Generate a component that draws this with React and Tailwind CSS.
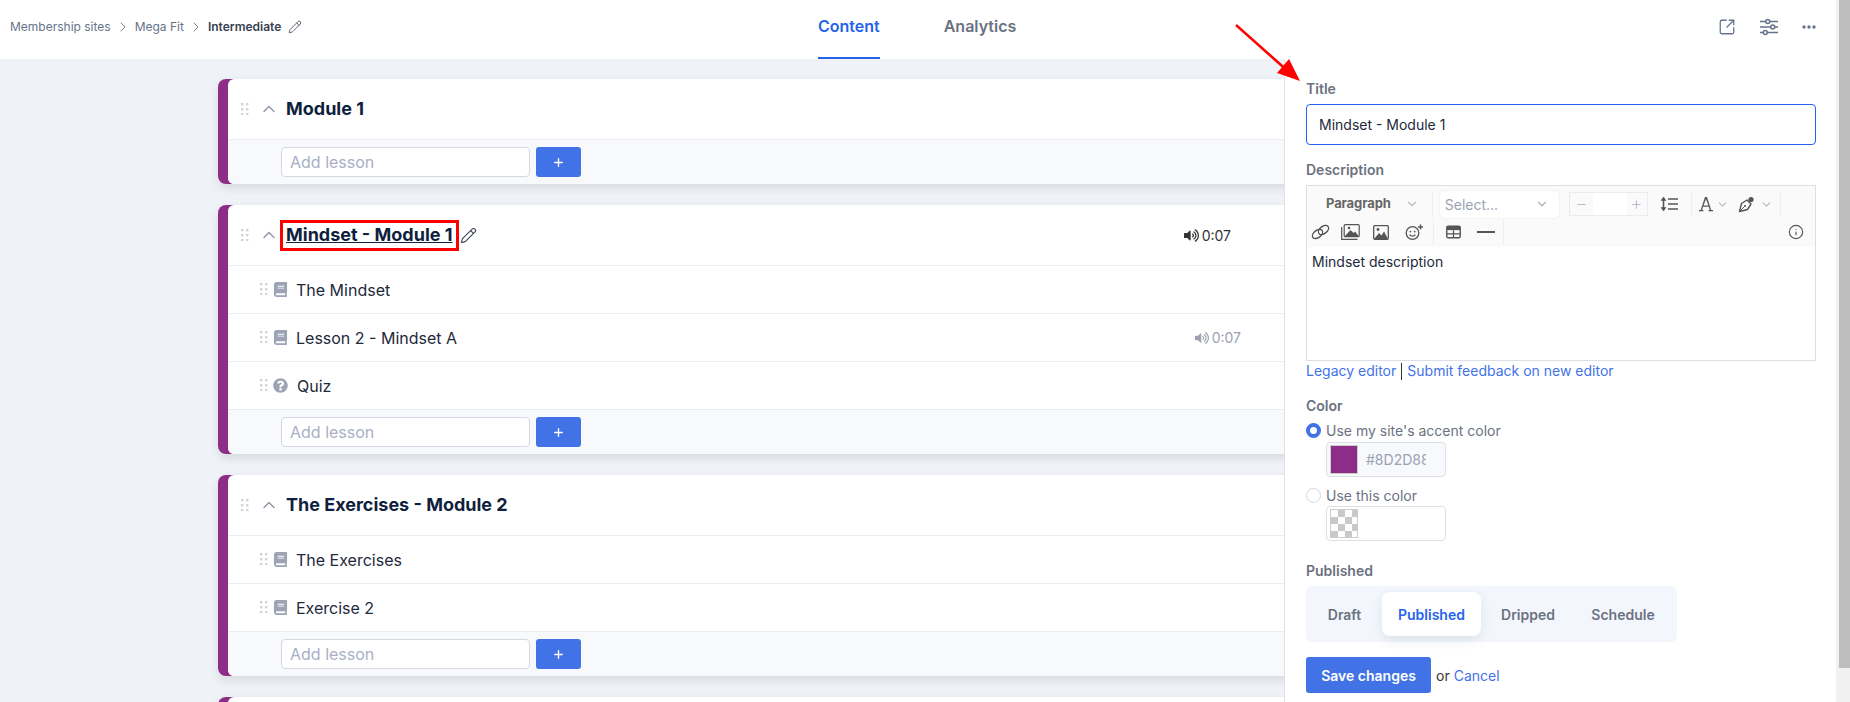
import { ChevronUp, ChevronRight, ChevronDown, Pencil, SquareArrowOutUpRight, Minus, Plus, Info } from "lucide-react";
import { FaBook, FaQuestionCircle, FaVolumeUp } from "react-icons/fa";

const PURPLE_CARD_SHADOW = "shadow-[0_4px_10px_rgba(30,41,59,0.12)]";

function Grip({ className }) {
  return (
    <svg width="8" height="12" viewBox="0 0 8 12" className={className}>
      {[1, 6].map((x) =>
        [1, 6, 11].map((y) => <rect key={`${x}-${y}`} x={x - 1} y={y - 1} width="2.4" height="2.4" fill="#cfd3da" />)
      )}
    </svg>
  );
}

function AddLesson() {
  return (
    <div className="flex h-[45px] items-center gap-[6px] border-t border-[#e9ecf0] bg-[#f7f9fc] pl-[53px]">
      <div className="flex h-[30px] w-[249px] items-center rounded-[4px] border border-[#d5d8e0] bg-white pl-[8px] text-[16px] text-[#a9b0c6]">
        Add lesson
      </div>
      <div className="flex h-[30px] w-[45px] items-center justify-center rounded-[3px] bg-[#4273e6] text-white">
        <Plus size={13} strokeWidth={2.5} />
      </div>
    </div>
  );
}

function LessonRow({ title, quiz, audio }) {
  return (
    <div className="flex h-[48px] items-center border-t border-[#e9ecf0] pl-[32px] pr-[83px] text-[16px] text-[#1e293b]">
      <Grip className="mt-[-2px]" />
      {quiz ? (
        <FaQuestionCircle size={15} className="ml-[5px] mr-[9px] text-[#9ca3b4]" />
      ) : (
        <FaBook size={15} className="ml-[5px] mr-[8px] mt-[-1px] text-[#9ca3b4]" />
      )}
      <span>{title}</span>
      {audio && (
        <span className="ml-auto flex items-center gap-[3px] text-[14px] text-[#9ca3af]">
          <FaVolumeUp size={14} />
          {audio}
        </span>
      )}
    </div>
  );
}

function Card({ title, highlight, audio, lessons = [], footer = true }) {
  return (
    <div className={`mr-[-40px] shrink-0 rounded-[8px] bg-[#8d2d88] pl-[10px] ${PURPLE_CARD_SHADOW}`}>
      <div className="overflow-hidden rounded-l-[6px] bg-white">
        <div className="flex h-[60px] items-center pr-[60px]">
          <Grip className="ml-[13px]" />
          <ChevronUp size={20} strokeWidth={1.6} className="ml-[10px] text-[#8c95a6]" />
          {highlight ? (
            <>
              <span className="ml-[1px] border-[3px] border-[#f00] px-[3px] py-[1.5px] text-[18px] leading-[22px] font-bold text-[#0f1f3d] underline">
                {title}
              </span>
              <Pencil size={17} strokeWidth={1.5} className="ml-[1px] text-[#374151]" />
            </>
          ) : (
            <span className="ml-[7px] text-[18px] leading-[22px] font-bold text-[#0f1f3d]">{title}</span>
          )}
          {audio && (
            <span className="ml-auto mr-[33px] flex items-center gap-[3px] text-[14px] text-[#333]">
              <FaVolumeUp size={15} />
              {audio}
            </span>
          )}
        </div>
        {lessons.map((l) => (
          <LessonRow key={l.title} {...l} />
        ))}
        {footer && <AddLesson />}
      </div>
    </div>
  );
}

function Label({ children, className = "" }) {
  return <div className={`text-[14px] leading-[20px] font-semibold text-[#6b7280] ${className}`}>{children}</div>;
}

function ToolSep({ className = "" }) {
  return <div className={`h-[26px] w-px bg-[#eceef1] ${className}`} />;
}

function LineHeightIcon() {
  return (
    <svg width="18" height="16" viewBox="0 0 18 16" className="text-[#555]" fill="none" stroke="currentColor">
      <path d="M3.5 2v12" strokeWidth="1.6" />
      <path d="M1 4.5 3.5 1 6 4.5zM1 11.5 3.5 15 6 11.5z" fill="currentColor" strokeWidth="0.5" />
      <path d="M8 3h10M8 8h10M8 13h10" strokeWidth="1.7" />
    </svg>
  );
}

function FontIcon() {
  return (
    <svg width="14" height="16" viewBox="0 0 14 16" className="text-[#555]" fill="currentColor">
      <path d="M6 1h2l4.2 13H14v1.2H9.6V14h1.2l-1-3.2H4.100L3.100 14h1.300v1.200H0V14h1.700zM7 3 4.500 9.500h4.900z" />
    </svg>
  );
}

function PenIcon() {
  return (
    <svg width="17" height="17" viewBox="0 0 17 17" fill="none" stroke="#555" strokeWidth="1.4" className="ml-[9px]">
      <path d="M1.500 15.500 3.500 7.500 9 4l4 4-3.500 5.500z" strokeLinejoin="round" />
      <path d="M1.800 15.200 6.200 10.800" strokeWidth="1" />
      <circle cx="7" cy="10" r="1.100" fill="#555" stroke="none" />
      <circle cx="13" cy="3.500" r="2.600" fill="#555" stroke="none" />
    </svg>
  );
}

function LinkIcon() {
  return (
    <svg width="19" height="16" viewBox="0 0 19 16" fill="none" stroke="#555" strokeWidth="1.400" className="ml-[4px]">
      <ellipse cx="6.500" cy="10" rx="5.800" ry="3.600" transform="rotate(-38 6.500 10)" />
      <ellipse cx="12.500" cy="6" rx="5.800" ry="3.600" transform="rotate(-38 12.500 6)" />
    </svg>
  );
}

function ImageIcon({ className = "" }) {
  return (
    <svg width="16" height="15" viewBox="0 0 16 15" className={className}>
      <rect x="0.700" y="0.700" width="14.600" height="13.600" fill="none" stroke="#555" strokeWidth="1.300" rx="1" />
      <circle cx="5" cy="4.500" r="1.400" fill="#555" />
      <path d="M1 14 6 8l2.500 2.500L11 6.500 15 14z" fill="#555" />
    </svg>
  );
}

function ImagesIcon({ className = "" }) {
  return (
    <svg width="19" height="16" viewBox="0 0 19 16" className={className}>
      <path d="M0.700 3v12.300H16.500" fill="none" stroke="#555" strokeWidth="1.200" />
      <rect x="3.200" y="0.700" width="15" height="12" fill="none" stroke="#555" strokeWidth="1.200" rx="1" />
      <circle cx="8" cy="4" r="1.300" fill="#555" />
      <path d="M3.500 12.500 9.500 6l3 3 1.500-1.500 4 5z" fill="#555" />
    </svg>
  );
}

function EmojiIcon() {
  return (
    <svg width="19" height="16" viewBox="0 0 19 16" fill="none" stroke="#555" strokeWidth="1.300">
      <circle cx="7.500" cy="9" r="6.300" />
      <circle cx="5.400" cy="7.600" r="0.900" fill="#555" stroke="none" />
      <circle cx="9.600" cy="7.600" r="0.900" fill="#555" stroke="none" />
      <path d="M4.600 10.600c1.400 2 4.400 2 5.800 0" />
      <path d="M15.500 0.500v5M13 3h5" strokeWidth="1.400" />
    </svg>
  );
}

function TableIcon({ className = "" }) {
  return (
    <svg width="15" height="14" viewBox="0 0 16 14" className={className}>
      <rect x="0.800" y="0.800" width="14.400" height="12.400" rx="1.500" fill="none" stroke="#555" strokeWidth="1.500" />
      <path d="M1 1h14v4H1z" fill="#555" />
      <path d="M8 5v8M1 9h14" stroke="#555" strokeWidth="1.300" />
    </svg>
  );
}

function Editor() {
  return (
    <div className="h-[176px] border border-[#dcdfe3] bg-white">
      <div className="h-[61px] bg-[#fafafa] text-[#555]">
        <div className="flex h-[33px] items-center pt-[3px]">
          <span className="ml-[19px] text-[13px] font-bold tracking-[-0.1px] text-[#666]">Paragraph</span>
          <ChevronDown size={14} className="ml-[14px] text-[#b6bcc6]" />
          <ToolSep className="ml-[13px]" />
          <div className="ml-[7px] flex h-[27px] w-[119px] items-center justify-between rounded-[5px] bg-white pl-[5px] pr-[10px] text-[14px] text-[#9aa3b2] shadow-[0_0_0_1px_#f2f3f5]">
            Select...
            <ChevronDown size={14} className="text-[#a9b0bb]" />
          </div>
          <div className="ml-[10px] flex h-[24px] w-[79px] border border-[#e9ebef]">
            <div className="flex w-[23px] items-center justify-center text-[#b6bcc6]">
              <Minus size={13} />
            </div>
            <div className="w-[34px] bg-white" />
            <div className="flex flex-1 items-center justify-center text-[#b6bcc6]">
              <Plus size={13} />
            </div>
          </div>
          <div className="ml-[12px] flex w-[18px] items-center">
            <LineHeightIcon />
          </div>
          <ToolSep className="ml-[13px]" />
          <div className="ml-[7px] flex items-center">
            <FontIcon />
          </div>
          <ChevronDown size={13} className="ml-[3px] text-[#b6bcc6]" />
          <PenIcon />
          <ChevronDown size={13} className="ml-[5px] text-[#b6bcc6]" />
          <ToolSep className="ml-[7px]" />
        </div>
        <div className="flex h-[28px] items-center pb-[2px]">
          <LinkIcon />
          <ImagesIcon className="ml-[11px]" />
          <ImageIcon className="ml-[13px]" />
          <div className="ml-[16px]">
            <EmojiIcon />
          </div>
          <ToolSep className="ml-[9px]" />
          <TableIcon className="ml-[12px]" />
          <div className="ml-[16px] h-[2px] w-[18px] bg-[#555]" />
          <ToolSep className="ml-[8px]" />
          <Info size={16} strokeWidth={1.7} className="ml-auto mr-[11px]" />
        </div>
      </div>
      <div className="px-[5px] pt-[5px] text-[14px] leading-[20px] text-[#1e293b]">Mindset description</div>
    </div>
  );
}

function Swatch({ hex, checker }) {
  return (
    <div className={`ml-[20px] flex h-[35px] w-[120px] items-center rounded-[4px] border border-[#dcdfe6] pl-[3px] ${hex ? "bg-[#f7f9fc]" : "bg-white"}`}>
      {checker ? (
        <div className="h-[29px] w-[28px] border border-[#ccc] bg-[repeating-conic-gradient(#c9c9c9_0_25%,#fff_0_50%)] bg-[length:14px_14px]" />
      ) : (
        <div className="h-[29px] w-[28px] border border-[#ccc] bg-[#8d2d88]" />
      )}
      {hex && <span className="ml-[8px] w-[60px] overflow-hidden text-[14px] whitespace-nowrap text-[#9aa3b2]">{hex}</span>}
    </div>
  );
}

function Panel() {
  return (
    <div className="relative z-10 h-full w-[552px] shrink-0 border-l border-[#dfe3e8] bg-white pl-[21px] pr-[20px]">
      <Label className="mt-[20px]">Title</Label>
      <div className="mt-[5px] flex h-[41px] items-center rounded-[4px] border border-[#2563eb] pl-[12px] text-[14px] text-[#1e293b]">
        Mindset - Module 1
      </div>
      <Label className="mt-[15px]">Description</Label>
      <div className="mt-[5px]">
        <Editor />
      </div>
      <div className="flex items-center text-[14px] leading-[20px] text-[#4273e6]">
        <span>Legacy editor</span>
        <span className="mx-[5px] h-[17px] w-px bg-[#333]" />
        <span>Submit feedback on new editor</span>
      </div>
      <Label className="mt-[15px]">Color</Label>
      <div className="mt-[4px] flex h-[20px] items-center text-[14px] text-[#6b7280]">
        <span className="mr-[5px] h-[15px] w-[15px] rounded-full border-[4px] border-[#4273e6] bg-white" />
        Use my site's accent color
      </div>
      <div className="mt-[2px]">
        <Swatch hex="#8D2D88" />
      </div>
      <div className="mt-[8px] flex h-[20px] items-center text-[14px] text-[#6b7280]">
        <span className="mr-[5px] h-[15px] w-[15px] rounded-full border border-[#d5d8e0] bg-white" />
        Use this color
      </div>
      <div className="mt-[1px]">
        <Swatch checker />
      </div>
      <Label className="mt-[20px]">Published</Label>
      <div className="mt-[5px] flex h-[56px] w-[371px] items-center rounded-[6px] bg-[#f3f7fd] pl-[8px] text-[14px] font-semibold text-[#6b7280]">
        <span className="mr-[7px] w-[61px] text-center">Draft</span>
        <span className="flex h-[44px] w-[99px] items-center justify-center rounded-[8px] bg-white text-[#2563eb] shadow-[0_4px_12px_rgba(30,41,59,0.1)]">
          Published
        </span>
        <span className="w-[94px] text-center">Dripped</span>
        <span className="w-[96px] text-center">Schedule</span>
      </div>
      <div className="mt-[15px] flex items-center text-[14px] text-[#333]">
        <span className="flex h-[36px] w-[125px] items-center justify-center rounded-[3px] bg-[#4273e6] font-semibold text-white">
          Save changes
        </span>
        <span className="ml-[5px]">or</span>
        <span className="ml-[4px] text-[#4273e6]">Cancel</span>
      </div>
    </div>
  );
}

function TopBar() {
  return (
    <div className="relative flex h-[59px] shrink-0 items-center bg-white pb-[5px]">
      <div className="flex items-center pl-[10px] text-[12px] text-[#64748b]">
        <span>Membership sites</span>
        <ChevronRight size={16} strokeWidth={1.3} className="mx-[4px]" />
        <span>Mega Fit</span>
        <ChevronRight size={16} strokeWidth={1.3} className="mx-[4px]" />
        <span className="font-semibold text-[#374151]">Intermediate</span>
        <Pencil size={14} strokeWidth={1.5} className="ml-[7px] text-[#4b5563]" />
      </div>
      <div className="absolute left-[818px] top-0 flex h-[59px] gap-[64px] text-[16px] font-semibold">
        <span className="h-[59px] border-b-2 border-[#2563eb] pt-[14px] text-[#2563eb]">Content</span>
        <span className="pt-[14px] text-[#6b7280]">Analytics</span>
      </div>
      <div className="ml-auto flex items-center gap-[24px] pr-[20px] text-[#64748b]">
        <SquareArrowOutUpRight size={18} strokeWidth={1.7} />
        <svg width="18" height="18" viewBox="0 0 18 18" fill="none" stroke="currentColor" strokeWidth="1.5">
          <path d="M0 3.500h5.500M10 3.500h8M0 9h10.500M15 9h3M0 14.500h3M7.500 14.500H18" />
          <circle cx="7.700" cy="3.500" r="2" />
          <circle cx="12.700" cy="9" r="2" />
          <circle cx="5.300" cy="14.500" r="2" />
        </svg>
        <svg width="14" height="4" viewBox="0 0 14 4" fill="currentColor">
          <circle cx="2" cy="2" r="1.700" />
          <circle cx="7" cy="2" r="1.700" />
          <circle cx="12" cy="2" r="1.700" />
        </svg>
      </div>
    </div>
  );
}

export default function App() {
  return (
    <div className="relative flex h-[702px] overflow-hidden bg-[#eff3f7] font-['Inter',sans-serif]">
      <div className="flex min-w-0 flex-1 flex-col">
        <TopBar />
        <div className="flex min-h-0 flex-1">
          <div className="flex min-w-0 flex-1 flex-col gap-[21px] overflow-hidden pl-[218px] pt-[20px]">
            <Card title="Module 1" />
            <Card
              title="Mindset - Module 1"
              highlight
              audio="0:07"
              lessons={[
                { title: "The Mindset" },
                { title: "Lesson 2 - Mindset A", audio: "0:07" },
                { title: "Quiz", quiz: true },
              ]}
            />
            <Card
              title="The Exercises - Module 2"
              lessons={[{ title: "The Exercises" }, { title: "Exercise 2" }]}
            />
            <Card title="" footer={false} />
          </div>
          <Panel />
        </div>
      </div>
      {/* scrollbar */}
      <div className="flex w-[14px] shrink-0 flex-col bg-[#f1f1f1] pl-[3px]">
        <div className="h-[668px] bg-[#bebebe]" />
      </div>
      {/* red annotation arrow */}
      <svg className="absolute left-[1225px] top-[15px] z-20" width="90" height="80" viewBox="0 0 90 80">
        <path d="M11 10 65 58" stroke="#f00" strokeWidth="2.500" />
        <path d="M75 66 52 58 64 44z" fill="#f00" />
      </svg>
    </div>
  );
}
